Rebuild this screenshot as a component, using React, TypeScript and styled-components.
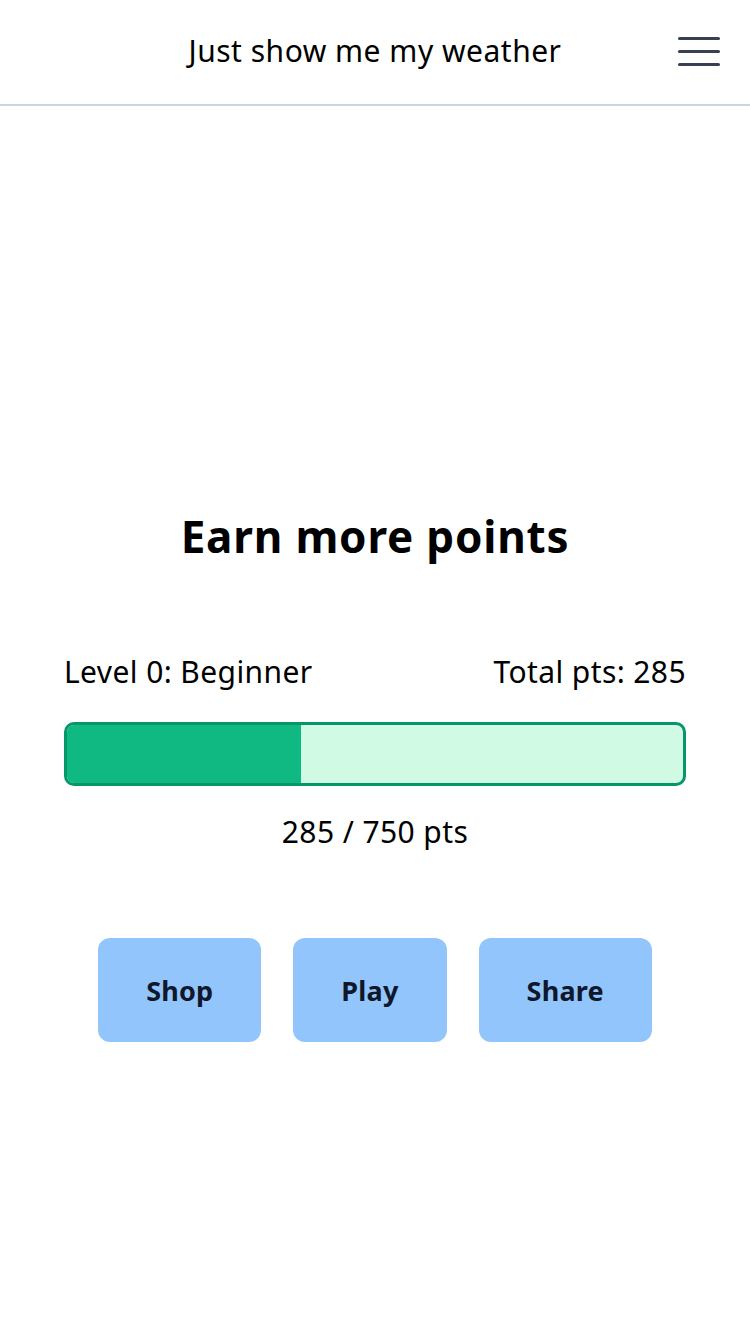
import React from "react";
import styled, { createGlobalStyle } from "styled-components";

const Global = createGlobalStyle`
  html, body { margin: 0; padding: 0; background: #ffffff; }
  body { font-family: "Noto Sans", "Open Sans", sans-serif; color: #000; }
  * { box-sizing: border-box; }
`;

const Page = styled.div`
  width: 750px;
  min-height: 1334px;
  display: flex;
  flex-direction: column;
`;

const Header = styled.header`
  height: 106px;
  border-bottom: 2px solid #cbd5e1;
  display: flex;
  align-items: center;
  justify-content: center;
  position: relative;
`;

const Title = styled.h1`
  margin: 0;
  margin-top: -3px;
  font-size: 30px;
  font-weight: 400;
  letter-spacing: 0.5px;
`;

const Burger = styled.button`
  position: absolute;
  right: 30px;
  top: 37px;
  width: 43px;
  height: 29px;
  padding: 0;
  border: none;
  background: transparent;
  display: flex;
  flex-direction: column;
  justify-content: space-between;
  align-items: center;
`;

const Line = styled.span`
  display: block;
  width: 42px;
  height: 3px;
  border-radius: 2px;
  background: #374151;
`;

const Main = styled.main`
  display: flex;
  flex-direction: column;
  align-items: center;
  padding: 402px 64px 0;
`;

const Heading = styled.h2`
  margin: 0;
  font-size: 44px;
  font-weight: 700;
  line-height: 56px;
  letter-spacing: 0.8px;
`;

const Stats = styled.div`
  width: 100%;
  margin-top: 90px;
  display: flex;
  justify-content: space-between;
  font-size: 30px;
  line-height: 36px;
  letter-spacing: 0.4px;
`;

const Track = styled.div`
  width: 100%;
  height: 64px;
  margin-top: 32px;
  border: 3px solid #059669;
  border-radius: 10px;
  background: #d1fae5;
  overflow: hidden;
  display: flex;
`;

const Fill = styled.div`
  height: 100%;
  background: #10b981;
`;

const Caption = styled.div`
  margin-top: 28px;
  font-size: 30px;
  line-height: 36px;
  letter-spacing: 0.4px;
`;

const Actions = styled.div`
  margin-top: 88px;
  display: flex;
  gap: 32px;
`;

const Action = styled.button`
  height: 104px;
  padding: 0 48px;
  border: none;
  border-radius: 12px;
  background: #93c5fd;
  color: #0f172a;
  font-family: "Noto Sans", "Open Sans", sans-serif;
  font-size: 27px;
  font-weight: 700;
  letter-spacing: 0.2px;
`;

export default function App() {
  const pts = 285;
  const goal = 750;
  return (
    <Page>
      <Global />
      <Header>
        <Title>Just show me my weather</Title>
        <Burger aria-label="menu">
          <Line />
          <Line />
          <Line />
        </Burger>
      </Header>
      <Main>
        <Heading>Earn more points</Heading>
        <Stats>
          <span>Level 0: Beginner</span>
          <span>Total pts: {pts}</span>
        </Stats>
        <Track>
          <Fill style={{ width: `${(pts / goal) * 100}%` }} />
        </Track>
        <Caption>
          {pts} / {goal} pts
        </Caption>
        <Actions>
          <Action>Shop</Action>
          <Action>Play</Action>
          <Action>Share</Action>
        </Actions>
      </Main>
    </Page>
  );
}
